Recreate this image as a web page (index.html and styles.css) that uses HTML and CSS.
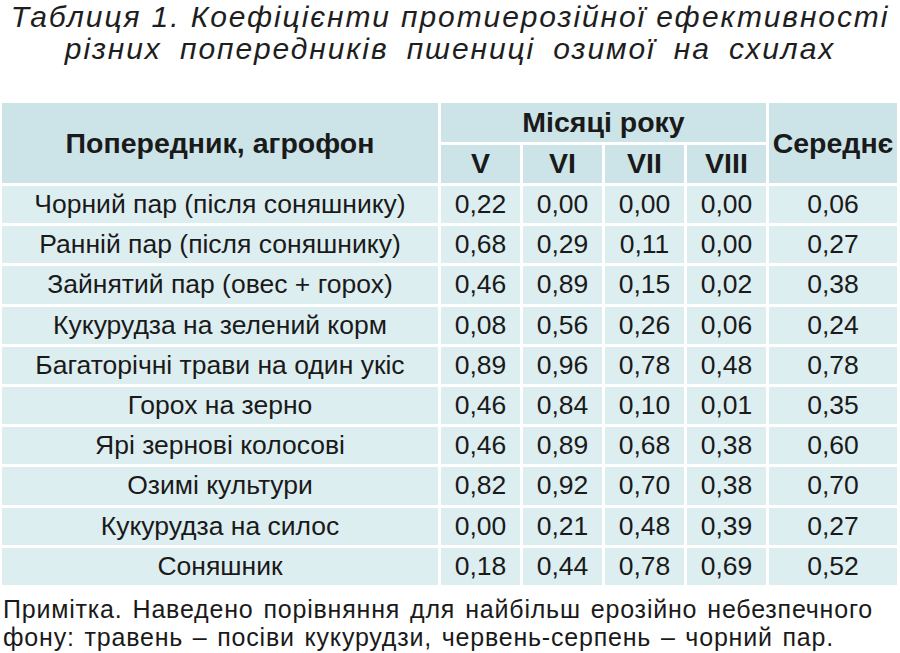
FILE: index.html
```html
<!DOCTYPE html>
<html lang="uk">
<head>
<meta charset="utf-8">
<title>Таблиця 1</title>
<link rel="stylesheet" href="styles.css">
</head>
<body>
<div class="page">
  <h1 class="title">
    <span class="title-line">Таблиця 1. Коефіцієнти протиерозійної ефективності</span>
    <span class="title-line second">різних попередників пшениці озимої на схилах</span>
  </h1>
  <table class="data">
    <colgroup>
      <col class="c-name">
      <col class="c-m">
      <col class="c-m">
      <col class="c-m">
      <col class="c-m">
      <col class="c-avg">
    </colgroup>
    <thead>
      <tr>
        <th rowspan="2" class="h-name">Попередник, агрофон</th>
        <th colspan="4">Місяці року</th>
        <th rowspan="2" class="h-avg">Середнє</th>
      </tr>
      <tr>
        <th>V</th><th>VI</th><th>VII</th><th>VIII</th>
      </tr>
    </thead>
    <tbody>
      <tr><td>Чорний пар (після соняшнику)</td><td>0,22</td><td>0,00</td><td>0,00</td><td>0,00</td><td>0,06</td></tr>
      <tr><td>Ранній пар (після соняшнику)</td><td>0,68</td><td>0,29</td><td>0,11</td><td>0,00</td><td>0,27</td></tr>
      <tr><td>Зайнятий пар (овес + горох)</td><td>0,46</td><td>0,89</td><td>0,15</td><td>0,02</td><td>0,38</td></tr>
      <tr><td>Кукурудза на зелений корм</td><td>0,08</td><td>0,56</td><td>0,26</td><td>0,06</td><td>0,24</td></tr>
      <tr><td>Багаторічні трави на один укіс</td><td>0,89</td><td>0,96</td><td>0,78</td><td>0,48</td><td>0,78</td></tr>
      <tr><td>Горох на зерно</td><td>0,46</td><td>0,84</td><td>0,10</td><td>0,01</td><td>0,35</td></tr>
      <tr><td>Ярі зернові колосові</td><td>0,46</td><td>0,89</td><td>0,68</td><td>0,38</td><td>0,60</td></tr>
      <tr><td>Озимі культури</td><td>0,82</td><td>0,92</td><td>0,70</td><td>0,38</td><td>0,70</td></tr>
      <tr><td>Кукурудза на силос</td><td>0,00</td><td>0,21</td><td>0,48</td><td>0,39</td><td>0,27</td></tr>
      <tr><td>Соняшник</td><td>0,18</td><td>0,44</td><td>0,78</td><td>0,69</td><td>0,52</td></tr>
    </tbody>
  </table>
  <div class="note">
    <div class="note-line first">Примітка. Наведено порівняння для найбільш ерозійно небезпечного</div>
    <div class="note-line second">фону: травень – посіви кукурудзи, червень-серпень – чорний пар.</div>
  </div>
</div>
</body>
</html>
```

FILE: styles.css
```css
html, body {
  margin: 0;
  padding: 0;
  background: #ffffff;
}

.page {
  width: 900px;
  height: 653px;
  overflow: hidden;
  color: #1a1a1a;
  font-family: "Liberation Sans", Arial, sans-serif;
}

.title {
  margin: 0;
  padding-top: 1px;
  font-size: 30px;
  font-weight: normal;
  font-style: italic;
  letter-spacing: 1.9px;
  text-align: center;
  line-height: 32px;
  color: #1e1e1e;
}

.title-line {
  display: block;
}

.title-line.second {
  word-spacing: 8px;
}

.data {
  margin-top: 35px;
  margin-left: -1px;
  width: 901px;
  table-layout: fixed;
  border-collapse: separate;
  border-spacing: 3px;
}

.c-name { width: 436px; }
.c-m { width: 79px; }
.c-avg { width: 128px; }

.data th,
.data td {
  padding: 0;
  text-align: center;
  vertical-align: middle;
  color: #1a1a1a;
  white-space: nowrap;
}

.data th {
  height: 38.5px;
  background: #cce4e8;
  font-weight: bold;
  font-size: 28.5px;
}

.data td {
  height: 37.2px;
  background: #ddeef1;
  font-size: 26.5px;
}

.note {
  margin-top: 7px;
  padding-left: 3px;
  width: 870px;
  font-size: 25px;
  letter-spacing: 0.8px;
  line-height: 28px;
  color: #1a1a1a;
}

.note-line.first {
  text-align: justify;
  text-align-last: justify;
}

.note-line.second {
  word-spacing: 2px;
}
```
